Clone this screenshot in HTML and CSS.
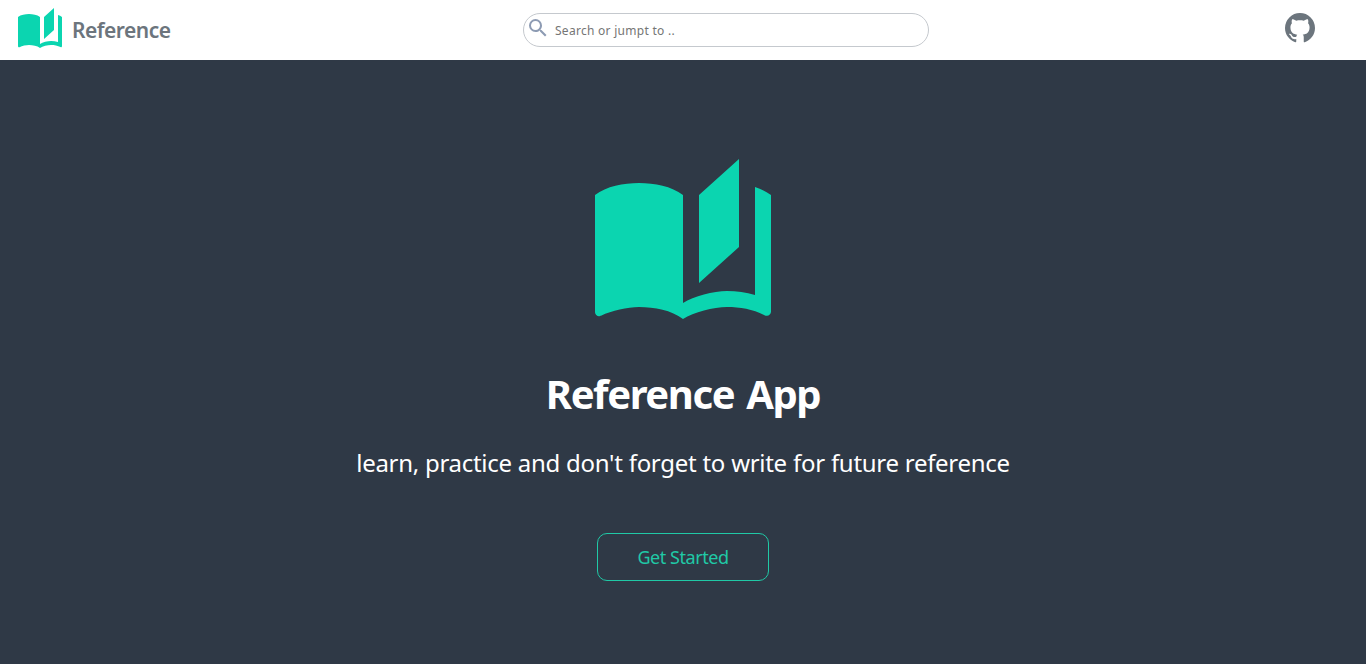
FILE: index.html
```html
<!DOCTYPE html>
<html lang="en">
<head>
<meta charset="utf-8">
<title>Reference</title>
<link rel="stylesheet" href="styles.css">
</head>
<body>
<svg class="symbols" aria-hidden="true">
  <symbol id="book" viewBox="0 0 24 24"><path d="M19 2L14 6.5V17.5L19 13V2M6.5 5C4.55 5 2.45 5.4 1 6.5V21.16C1 21.41 1.25 21.66 1.5 21.66C1.6 21.66 1.65 21.59 1.75 21.59C3.1 20.94 5.05 20.5 6.5 20.5C8.45 20.5 10.55 20.9 12 22C13.35 21.15 15.8 20.5 17.5 20.5C19.15 20.5 20.85 20.81 22.25 21.56C22.35 21.61 22.4 21.59 22.5 21.59C22.75 21.59 23 21.34 23 21.09V6.5C22.4 6.05 21.75 5.75 21 5.5V19C19.9 18.65 18.7 18.5 17.5 18.5C15.8 18.5 13.35 19.15 12 20V6.5C10.55 5.4 8.45 5 6.5 5Z"/></symbol>
</svg>
<header class="navbar">
  <a class="brand">
    <svg class="brand-logo"><use href="#book"/></svg>
    <span class="brand-name">Reference</span>
  </a>
  <div class="search">
    <svg class="search-icon" viewBox="0 0 24 24"><path d="M9.5 3A6.5 6.5 0 0 1 16 9.5C16 11.11 15.41 12.59 14.44 13.73L14.71 14H15.5L20.5 19L19 20.5L14 15.5V14.71L13.73 14.44C12.59 15.41 11.11 16 9.5 16A6.5 6.5 0 0 1 3 9.5A6.5 6.5 0 0 1 9.5 3M9.5 5C7 5 5 7 5 9.5S7 14 9.5 14S14 12 14 9.5S12 5 9.5 5Z"/></svg>
    <input class="search-input" type="text" placeholder="Search or jumpt to ..">
  </div>
  <a class="github">
    <svg class="github-icon" viewBox="0 0 24 24"><path d="M12,2A10,10 0 0,0 2,12C2,16.42 4.87,20.17 8.84,21.5C9.34,21.58 9.5,21.27 9.5,21C9.5,20.77 9.5,20.14 9.5,19.31C6.73,19.91 6.14,17.97 6.14,17.97C5.68,16.81 5.03,16.5 5.03,16.5C4.12,15.88 5.1,15.9 5.1,15.9C6.1,15.97 6.63,16.93 6.63,16.93C7.5,18.45 8.97,18 9.54,17.76C9.63,17.11 9.89,16.67 10.17,16.42C7.95,16.17 5.62,15.31 5.62,11.5C5.62,10.39 6,9.5 6.65,8.79C6.55,8.54 6.2,7.5 6.75,6.15C6.75,6.15 7.59,5.88 9.5,7.17C10.29,6.95 11.15,6.84 12,6.84C12.85,6.84 13.71,6.95 14.5,7.17C16.41,5.88 17.25,6.15 17.25,6.15C17.8,7.5 17.45,8.54 17.35,8.79C18,9.5 18.38,10.39 18.38,11.5C18.38,15.32 16.04,16.16 13.81,16.41C14.17,16.72 14.5,17.33 14.5,18.26C14.5,19.6 14.5,20.68 14.5,21C14.5,21.27 14.5,21.59 15.17,21.5C19.14,20.16 22,16.42 22,12A10,10 0 0,0 12,2Z"/></svg>
  </a>
</header>
<main class="hero">
  <svg class="hero-logo"><use href="#book"/></svg>
  <h1 class="hero-title">Reference App</h1>
  <p class="hero-text">learn, practice and don't forget to write for future reference</p>
  <button class="hero-button">Get Started</button>
</main>
</body>
</html>
```
FILE: styles.css
```css
* { box-sizing: border-box; }
body {
  margin: 0;
  height: 100vh;
  display: flex;
  flex-direction: column;
  overflow: hidden;
  font-family: "Noto Sans", "Open Sans", sans-serif;
  background: #2f3946;
}
.symbols { display: none; }
.navbar {
  height: 60px;
  flex: none;
  display: grid;
  grid-template-columns: 523px 406px 1fr;
  background: #fff;
}
.brand { display: flex; padding: 4px 0 0 16px; }
.brand-logo { width: 48px; height: 48px; fill: #0bd5b0; }
.brand-name {
  margin-left: 8px;
  font-size: 21px;
  font-weight: 600;
  line-height: 53px;
  letter-spacing: -0.5px;
  color: #6c757d;
}
.search {
  display: flex;
  height: 34px;
  margin-top: 13px;
  padding: 2px 2px 0;
  border: 1px solid #c5c9ce;
  border-radius: 17px;
}
.search-icon { width: 24px; height: 24px; fill: #8d9bb3; }
.search-input {
  flex: 1;
  height: 28px;
  margin-left: 5px;
  padding: 0;
  border: 0;
  outline: 0;
  background: none;
  font: 12px "Noto Sans", sans-serif;
  letter-spacing: 0.28px;
}
.search-input::placeholder { color: #757575; }
.github { justify-self: end; padding: 10px 48px 0 0; }
.github-icon { display: block; width: 36px; height: 36px; fill: #6c757d; }
.hero {
  flex: 1;
  display: flex;
  flex-direction: column;
  align-items: center;
  padding-top: 83px;
}
.hero-logo { flex: none; width: 192px; height: 192px; fill: #0bd5b0; }
.hero-title {
  margin: 29px 0 0;
  font-size: 40px;
  font-weight: 700;
  line-height: 60px;
  letter-spacing: -1.4px;
  word-spacing: 3px;
  color: #fff;
  white-space: nowrap;
}
.hero-text {
  margin: 19px 0 0;
  font-size: 24px;
  line-height: 40px;
  letter-spacing: -0.3px;
  word-spacing: 0.2px;
  color: #fff;
  white-space: nowrap;
}
.hero-button {
  width: 172px;
  height: 48px;
  margin-top: 50px;
  padding: 0 0 1px;
  border: 1px solid #20c9a6;
  border-radius: 10px;
  background: none;
  font: 18px "Noto Sans", sans-serif;
  letter-spacing: -0.45px;
  color: #20c9a6;
}
```
